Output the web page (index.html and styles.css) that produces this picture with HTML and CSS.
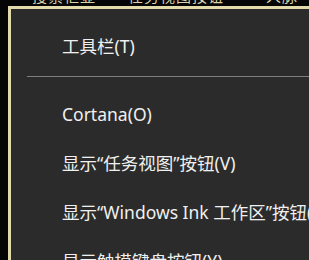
FILE: index.html
```html
<!DOCTYPE html>
<html lang="zh-CN">
<head>
    <meta charset="UTF-8">
    <title>任务栏菜单</title>
    <link rel="stylesheet" href="styles.css">
</head>
<body>
    <div class="behind">
        <span class="frag one">搜索框显</span>
        <span class="frag two">任务视图按钮</span>
        <span class="frag three">人脉</span>
    </div>
    <div class="menu">
        <div class="item">工具栏(T)</div>
        <div class="sep"><hr></div>
        <div class="item">Cortana(O)</div>
        <div class="item">显示“任务视图”按钮(V)</div>
        <div class="item">显示“Windows Ink 工作区”按钮(W)</div>
        <div class="item">显示触摸键盘按钮(Y)</div>
    </div>
</body>
</html>
```

FILE: styles.css
```css
html, body{margin:0; padding:0; background:#050505; overflow:hidden;}
body{width:309px; height:260px; font-family:"Noto Sans", "Noto Sans CJK SC", sans-serif;}

/* window behind the menu, only the bottom of its text shows */
.behind{height:6px; overflow:hidden; display:flex; white-space:nowrap;}
.frag{display:block; margin-top:-13px; font-size:15px; line-height:18px; color:#d9d2ad; letter-spacing:1px;}
.frag.one{margin-left:32px;}
.frag.two{margin-left:32px;}
.frag.three{margin-left:42px;}

.menu{margin-left:8px; width:340px; height:260px; background:#2b2b2b; border-left:3px solid #e2daab; border-top:3px solid #e2daab; padding-top:13px;}
.item{height:49px; line-height:49px; padding-left:51px; font-size:17.5px; color:#f0f0f0; white-space:nowrap;}
.sep{height:14px; padding-left:16px;}
.sep hr{margin:0; margin-top:5px; border:0; height:1px; background:#7d7d7d;}
```
